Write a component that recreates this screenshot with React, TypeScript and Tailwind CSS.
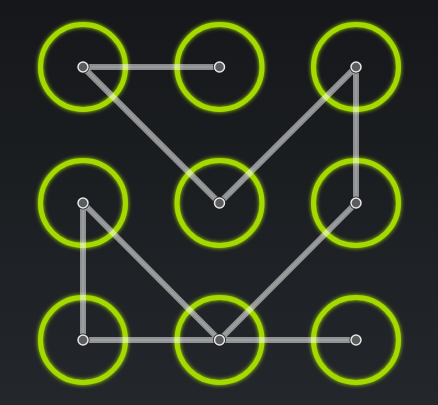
import React from "react";

const xs = [83, 219.5, 356];
const ys = [67, 203, 340];

const dots = ys.flatMap((y) => xs.map((x) => ({ x, y })));

// pattern segments as [col, row, col, row]
const segs: [number, number, number, number][] = [
  [0, 0, 1, 0],
  [0, 0, 1, 1],
  [1, 1, 2, 0],
  [2, 0, 2, 1],
  [2, 1, 1, 2],
  [1, 2, 0, 1],
  [0, 1, 0, 2],
  [0, 2, 1, 2],
  [1, 2, 2, 2],
];

const App = () => {
  return (
    <div className="w-[438px] h-[405px] bg-gradient-to-b from-[#15171a] to-[#23272b] overflow-hidden">
      <svg width="438" height="405" viewBox="0 0 438 405">
        <defs>
          <filter id="glow" x="-30%" y="-30%" width="160%" height="160%">
            <feGaussianBlur stdDeviation="2" result="b" />
            <feMerge>
              <feMergeNode in="b" />
              <feMergeNode in="SourceGraphic" />
            </feMerge>
          </filter>
        </defs>
        {dots.map((d, i) => (
          <circle
            key={i}
            cx={d.x}
            cy={d.y}
            r="42.5"
            fill="none"
            stroke="#a4da00"
            strokeWidth="5"
            filter="url(#glow)"
          />
        ))}
        <g stroke="#ffffff" strokeOpacity="0.5" strokeWidth="6" strokeLinecap="round">
          {segs.map(([a, b, c, d], i) => (
            <line key={i} x1={xs[a]} y1={ys[b]} x2={xs[c]} y2={ys[d]} />
          ))}
        </g>
        <g stroke="#ffffff" strokeOpacity="0.12" strokeWidth="2" strokeLinecap="round">
          {segs.map(([a, b, c, d], i) => (
            <line key={i} x1={xs[a]} y1={ys[b]} x2={xs[c]} y2={ys[d]} />
          ))}
        </g>
        {dots.map((d, i) => (
          <g key={i}>
            <circle cx={d.x} cy={d.y} r="6.5" fill="#1a1c1f" />
            <circle cx={d.x} cy={d.y} r="5" fill="#5a5c5e" stroke="#e8e8e8" strokeWidth="1.5" />
          </g>
        ))}
      </svg>
    </div>
  );
};

export default App;
